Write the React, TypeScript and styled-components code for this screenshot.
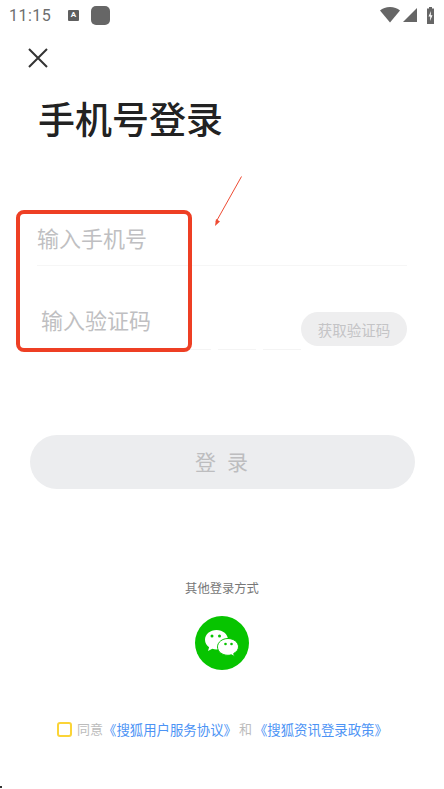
import React from "react";
import styled, { createGlobalStyle } from "styled-components";

const GlobalStyle = createGlobalStyle`
  html, body {
    margin: 0;
    padding: 0;
    background: #fff;
  }
  * {
    box-sizing: border-box;
  }
  body {
    font-family: "Noto Sans CJK SC", "Roboto", "Liberation Sans", sans-serif;
  }
`;

const Screen = styled.div`
  position: relative;
  width: 444px;
  height: 789px;
  overflow: hidden;
  background: #fff;
`;

const StatusBar = styled.div`
  height: 30px;
  padding: 0 10px 0 9px;
  display: flex;
  align-items: center;
  color: #6e6e6e;
`;

const Clock = styled.span`
  font-family: Roboto, sans-serif;
  font-size: 16px;
  letter-spacing: 0.5px;
  width: 59px;
`;

const NotifyA = styled.span`
  width: 11px;
  height: 11px;
  background: #5f5f5f;
  border-radius: 1px;
  color: #fff;
  font-family: Roboto, sans-serif;
  font-size: 8px;
  font-weight: 700;
  line-height: 10px;
  text-align: center;
`;

const NotifyApp = styled.span`
  width: 19px;
  height: 19px;
  margin-left: 12px;
  background: #666;
  border-radius: 5px;
`;

const StatusIcons = styled.div`
  margin-left: auto;
  display: flex;
  align-items: center;
  gap: 10px;
`;

const CloseButton = styled.button`
  display: block;
  width: 20px;
  height: 20px;
  margin: 18px 0 0 28px;
  padding: 0;
  border: 0;
  background: none;
`;

const Title = styled.h1`
  margin: 25px 0 0 38px;
  font-size: 37px;
  line-height: 50px;
  font-weight: 500;
  color: #222;
`;

const Form = styled.form`
  margin: 0 37px;
  padding-top: 75px;
`;

const PhoneField = styled.div`
  height: 48px;
  border-bottom: 1px solid #f6f6f6;
  font-size: 22px;
  line-height: 38px;
  color: #bfbfc2;
`;

const CodeField = styled.div`
  height: 84px;
  display: flex;
  justify-content: space-between;
  align-items: flex-end;
  font-size: 22px;
  color: #bfbfc2;
`;

const CodeInput = styled.div`
  width: 264px;
  height: 100%;
  display: flex;
  flex-direction: column;
  justify-content: flex-end;
`;

const CodePlaceholder = styled.span`
  margin: 0 0 11px 4px;
  line-height: 38px;
`;

const CodeUnderline = styled.div`
  display: flex;
  gap: 7px;
`;

const UnderlinePiece = styled.span<{ $width: number }>`
  width: ${(p) => p.$width}px;
  height: 1px;
  background: #f4f4f4;
`;

const CodeButton = styled.button`
  width: 106px;
  height: 34px;
  margin-bottom: 4px;
  border: 0;
  padding: 0;
  border-radius: 17px;
  background: #eeeeef;
  color: #c4c4c6;
  font-family: inherit;
  font-size: 14.5px;
`;

const LoginButton = styled.button`
  display: block;
  width: 385px;
  height: 54px;
  margin: 85px 0 0 30px;
  padding: 0 0 2px;
  border: 0;
  border-radius: 27px;
  background: #ecedef;
  color: #bdbdbf;
  font-family: inherit;
  font-size: 21px;
  letter-spacing: 11px;
  text-indent: 9px;
`;

const OtherSection = styled.div`
  margin-top: 90px;
  display: flex;
  flex-direction: column;
  align-items: center;
`;

const OtherLabel = styled.div`
  font-size: 12.3px;
  line-height: 18px;
  color: #777;
`;

const WechatButton = styled.button`
  width: 54px;
  height: 54px;
  margin-top: 19px;
  padding: 0;
  border: 0;
  border-radius: 50%;
  background: #07c400;
  display: flex;
  align-items: center;
  justify-content: center;
`;

const Agreement = styled.div`
  margin: 51px 0 0 57px;
  display: flex;
  align-items: center;
  font-size: 13px;
  line-height: 16px;
  white-space: nowrap;
  color: #bcbcbc;
`;

const Checkbox = styled.span`
  width: 15px;
  height: 15px;
  margin-right: 5px;
  border: 2px solid #fbd437;
  border-radius: 3px;
`;

const Link = styled.span`
  color: #4c93f5;
  font-size: 13.4px;
`;

const Joiner = styled.span<{ $gap?: number }>`
  margin: 0 ${(p) => p.$gap ?? 0}px;
`;

/* annotation drawn over the screenshot */
const RedBox = styled.div`
  position: absolute;
  left: 16px;
  top: 210px;
  width: 176px;
  height: 142px;
  border: 4px solid #ee3f24;
  border-radius: 8px;
`;

const Arrow = styled.svg`
  position: absolute;
  left: 210px;
  top: 172px;
`;

const CornerSpeck = styled.span`
  position: absolute;
  left: 0;
  top: 786px;
  width: 2px;
  height: 2px;
  background: #333;
`;

function WechatIcon() {
  return (
    <svg width="44" height="44" viewBox="0 0 44 44">
      <path
        d="M16.500 9C10.100 9 5 13.300 5 18.700c0 3 1.600 5.700 4.100 7.500L8 30l4.300-2.200c1.300.4 2.700.6 4.200.6 6.400 0 11.500-4.300 11.500-9.700S22.900 9 16.500 9z"
        fill="#fff"
      />
      <path
        d="M28 17.500c-5.800 0-10.500 3.800-10.500 8.400s4.700 8.400 10.500 8.400c1.200 0 2.300-.2 3.400-.5l3.100 1.700-.8-3c2.700-1.500 4.800-3.800 4.800-6.600 0-4.600-4.700-8.400-10.500-8.400z"
        fill="#fff"
        stroke="#07c400"
        strokeWidth="1"
      />
      <circle cx="12" cy="15" r="1.500" fill="#07c400" />
      <circle cx="19.500" cy="15" r="1.500" fill="#07c400" />
      <circle cx="25.500" cy="23" r="1.300" fill="#07c400" />
      <circle cx="31.500" cy="23" r="1.300" fill="#07c400" />
    </svg>
  );
}

export default function App() {
  return (
    <Screen>
      <GlobalStyle />
      <StatusBar>
        <Clock>11:15</Clock>
        <NotifyA>A</NotifyA>
        <NotifyApp />
        <StatusIcons>
          <svg width="37" height="16" viewBox="0 0 37 16">
            <path d="M0 3.500C2.500 1.300 6 0 10 0s7.500 1.300 10 3.500L10 15.500z" fill="#666" />
            <path d="M37 1v14H23z" fill="#666" />
          </svg>
          <svg width="7" height="17" viewBox="0 0 7 17">
            <path d="M2 0h3v1.500h2V17H0V1.500h2z" fill="#666" />
            <path d="M4 4 1.500 9.500h1.800L3 14l2.500-5.800H3.700z" fill="#fff" />
          </svg>
        </StatusIcons>
      </StatusBar>
      <CloseButton>
        <svg width="20" height="20" viewBox="0 0 20 20">
          <path d="M1 1l18 18M19 1 1 19" stroke="#333" strokeWidth="2" fill="none" />
        </svg>
      </CloseButton>
      <Title>手机号登录</Title>
      <Form>
        <PhoneField>输入手机号</PhoneField>
        <CodeField>
          <CodeInput>
            <CodePlaceholder>输入验证码</CodePlaceholder>
            <CodeUnderline>
              <UnderlinePiece $width={174} />
              <UnderlinePiece $width={38} />
              <UnderlinePiece $width={38} />
            </CodeUnderline>
          </CodeInput>
          <CodeButton type="button">获取验证码</CodeButton>
        </CodeField>
      </Form>
      <LoginButton type="button">登录</LoginButton>
      <OtherSection>
        <OtherLabel>其他登录方式</OtherLabel>
        <WechatButton type="button">
          <WechatIcon />
        </WechatButton>
      </OtherSection>
      <Agreement>
        <Checkbox />
        同意
        <Link>《搜狐用户服务协议》</Link>
        <Joiner $gap={2}>和</Joiner>
        <Link>《搜狐资讯登录政策》</Link>
      </Agreement>
      <RedBox />
      <Arrow width="36" height="56" viewBox="0 0 36 56">
        <path d="M31.500 4.500 6 50" stroke="#ee4b33" strokeWidth="1" fill="none" />
        <path d="M5 54l1-7 4 2.500z" fill="#ee4b33" />
      </Arrow>
      <CornerSpeck />
    </Screen>
  );
}
